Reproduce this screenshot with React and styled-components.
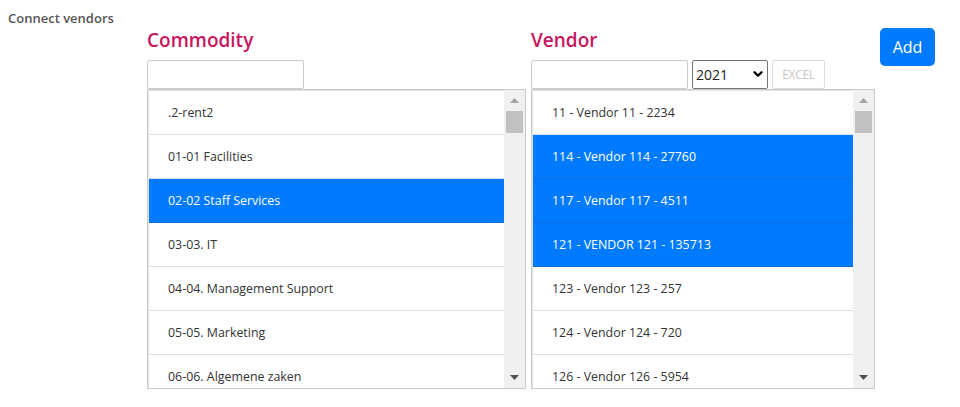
import React, { useState } from "react";
import styled, { createGlobalStyle } from "styled-components";
import { ChevronDown } from "lucide-react";

const GlobalStyle = createGlobalStyle`
  * { box-sizing: border-box; }
  html, body { margin: 0; padding: 0; background: #fff; }
  body {
    font-family: "Open Sans", "Noto Sans", "DejaVu Sans", sans-serif;
    color: #333;
  }
`;

const Page = styled.div`
  padding: 8px 0 0 8px;
  height: 407px;
  overflow: hidden;
`;

const SectionTitle = styled.div`
  height: 20px;
  font-size: 13px;
  line-height: 20px;
  font-weight: 600;
  color: #555;
`;

const Body = styled.div`
  display: flex;
  align-items: flex-start;
  gap: 5px;
  margin-left: 139px;
`;

const Column = styled.div`
  display: flex;
  flex-direction: column;
  width: ${(p) => p.$width}px;
`;

const Heading = styled.h2`
  margin: 0 0 8px;
  font-size: 19px;
  line-height: 24px;
  font-weight: 600;
  color: #c8155f;
`;

const Controls = styled.div`
  display: flex;
  gap: 4px;
  height: 29px;
`;

const SearchInput = styled.input`
  width: 157px;
  height: 29px;
  padding: 0 6px;
  border: 1px solid #cccccc;
  border-radius: 2px;
  font: inherit;
  font-size: 13px;
  outline: none;
`;

const SelectWrap = styled.div`
  position: relative;
  width: 76px;
  height: 29px;
`;

const YearSelect = styled.select`
  appearance: none;
  width: 100%;
  height: 100%;
  padding: 0 0 0 3px;
  border: 1px solid #767676;
  border-radius: 2px;
  background: #fff;
  font: inherit;
  font-size: 14px;
  color: #222;
  outline: none;
`;

const SelectArrow = styled.span`
  position: absolute;
  right: 3px;
  top: 7px;
  display: flex;
  pointer-events: none;
  color: #000;
`;

const ExcelButton = styled.button`
  width: 53px;
  height: 29px;
  padding: 0;
  border: 1px solid #dddddd;
  border-radius: 2px;
  background: #fff;
  color: #c6c6c6;
  font: inherit;
  font-size: 12px;
  letter-spacing: -0.3px;
`;

const AddButton = styled.button`
  width: 55px;
  height: 38px;
  padding: 0;
  border: none;
  border-radius: 5px;
  background: #007bff;
  color: #fff;
  font: inherit;
  font-size: 16px;
  cursor: pointer;
`;

const ListBox = styled.div`
  display: flex;
  height: 300px;
  border: 1px solid #cacaca;
  background: #fff;
`;

const Items = styled.ul`
  flex: 1;
  margin: 0;
  padding: 0;
  list-style: none;
  overflow: hidden;
  border-left: 1px solid #e2e2e2;
  border-top: 1px solid #e2e2e2;
  border-top-left-radius: 3px;
`;

const Item = styled.li`
  display: flex;
  align-items: center;
  height: 44px;
  padding-left: 19px;
  font-size: 12.4px;
  white-space: nowrap;
  cursor: pointer;
  border-bottom: 1px solid ${(p) => (p.$active ? "#0a70e0" : "#dfdfdf")};
  background: ${(p) => (p.$active ? "#007bff" : "#fff")};
  color: ${(p) => (p.$active ? "#fff" : "#333")};
`;

const ScrollTrack = styled.div`
  display: flex;
  flex-direction: column;
  width: 21px;
  background: #f0f0f0;
`;

const ScrollArrow = styled.div`
  display: flex;
  align-items: center;
  justify-content: center;
  height: 21px;
  color: ${(p) => (p.$disabled ? "#a3a3a3" : "#505050")};
`;

const ScrollThumb = styled.div`
  height: 22px;
  margin: 0 2px;
  background: #c1c1c1;
`;

const ScrollRest = styled.div`
  flex: 1;
`;

function Triangle({ down }) {
  return (
    <svg width="9" height="5" viewBox="0 0 9 5">
      <path d={down ? "M0 0H9L4.5 5Z" : "M0 5H9L4.5 0Z"} fill="currentColor" />
    </svg>
  );
}

function Scrollbar() {
  return (
    <ScrollTrack>
      <ScrollArrow $disabled>
        <Triangle />
      </ScrollArrow>
      <ScrollThumb />
      <ScrollRest />
      <ScrollArrow>
        <Triangle down />
      </ScrollArrow>
    </ScrollTrack>
  );
}

function MultiList({ items, selected, onToggle }) {
  return (
    <ListBox>
      <Items>
        {items.map((label, i) => (
          <Item key={label} $active={selected.includes(i)} onClick={() => onToggle(i)}>
            {label}
          </Item>
        ))}
      </Items>
      <Scrollbar />
    </ListBox>
  );
}

const commodities = [
  ".2-rent2",
  "01-01 Facilities",
  "02-02 Staff Services",
  "03-03. IT",
  "04-04. Management Support",
  "05-05. Marketing",
  "06-06. Algemene zaken",
];

const vendors = [
  "11 - Vendor 11 - 2234",
  "114 - Vendor 114 - 27760",
  "117 - Vendor 117 - 4511",
  "121 - VENDOR 121 - 135713",
  "123 - Vendor 123 - 257",
  "124 - Vendor 124 - 720",
  "126 - Vendor 126 - 5954",
];

export default function App() {
  const [commoditySel, setCommoditySel] = useState([2]);
  const [vendorSel, setVendorSel] = useState([1, 2, 3]);
  const [year, setYear] = useState("2021");

  const toggle = (setter) => (i) =>
    setter((sel) => (sel.includes(i) ? sel.filter((x) => x !== i) : [...sel, i]));

  return (
    <Page>
      <GlobalStyle />
      <SectionTitle>Connect vendors</SectionTitle>
      <Body>
        <Column $width={379}>
          <Heading>Commodity</Heading>
          <Controls>
            <SearchInput type="text" />
          </Controls>
          <MultiList items={commodities} selected={commoditySel} onToggle={toggle(setCommoditySel)} />
        </Column>
        <Column $width={344}>
          <Heading>Vendor</Heading>
          <Controls>
            <SearchInput type="text" />
            <SelectWrap>
              <YearSelect value={year} onChange={(e) => setYear(e.target.value)}>
                <option>2019</option>
                <option>2020</option>
                <option>2021</option>
                <option>2022</option>
              </YearSelect>
              <SelectArrow>
                <ChevronDown size={14} strokeWidth={4} />
              </SelectArrow>
            </SelectWrap>
            <ExcelButton disabled>EXCEL</ExcelButton>
          </Controls>
          <MultiList items={vendors} selected={vendorSel} onToggle={toggle(setVendorSel)} />
        </Column>
        <AddButton>Add</AddButton>
      </Body>
    </Page>
  );
}
